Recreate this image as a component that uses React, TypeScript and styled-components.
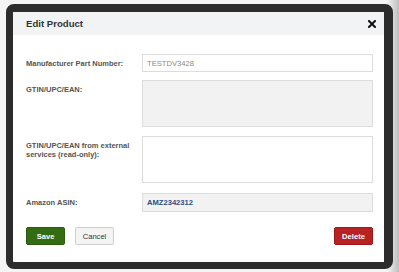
import React from 'react';
import styled, { createGlobalStyle } from 'styled-components';

const GlobalStyle = createGlobalStyle`
  html, body {
    margin: 0;
    padding: 0;
    background: #ececec;
    font-family: 'Liberation Sans', Arial, sans-serif;
  }
`;

const Page = styled.div`
  width: 399px;
  height: 272px;
  padding: 4px 0 0 6px;
  box-sizing: border-box;
  background: linear-gradient(90deg, #f4f4f4 0%, #f4f4f4 97%, #bdbdbd 100%);
`;

const Dialog = styled.div`
  width: 387px;
  height: 265px;
  box-sizing: border-box;
  border: 7px solid #2c2c2c;
  border-top-width: 8px;
  border-right-width: 9px;
  border-radius: 8px;
  background: #fff;
  display: flex;
  flex-direction: column;
  overflow: hidden;
`;

const Header = styled.div`
  height: 23px;
  flex: none;
  background: #f2f3f5;
  display: flex;
  align-items: center;
  justify-content: space-between;
  padding: 0 8px 0 13px;
`;

const Title = styled.div`
  font-size: 9.6px;
  font-weight: bold;
  color: #333;
`;

const CloseButton = styled.button`
  border: none;
  background: none;
  padding: 0;
  width: 9px;
  height: 9px;
  display: flex;
  align-items: center;
  justify-content: center;
  cursor: pointer;
`;

const Body = styled.div`
  flex: 1;
  display: flex;
  flex-direction: column;
  padding: 19px 11px 0 13px;
`;

const Row = styled.div<{ $gap: number }>`
  display: grid;
  grid-template-columns: 116px 1fr;
  margin-bottom: ${p => p.$gap}px;
`;

const Label = styled.label<{ $top: number }>`
  font-size: 7.5px;
  font-weight: bold;
  color: #555;
  line-height: 9px;
  padding-top: ${p => p.$top}px;
`;

const Field = styled.div<{ $height: number; $grey?: boolean }>`
  height: ${p => p.$height}px;
  box-sizing: border-box;
  border: 1px solid #dcdcdc;
  background: ${p => (p.$grey ? '#f2f2f2' : '#fff')};
  display: flex;
  align-items: center;
  padding-left: 4px;
`;

const FieldText = styled.span<{ $link?: boolean }>`
  font-size: 7.6px;
  color: ${p => (p.$link ? '#2d4f86' : '#8a8a8a')};
  font-weight: ${p => (p.$link ? 'bold' : 'normal')};
`;

const Footer = styled.div`
  display: flex;
  align-items: center;
  gap: 10px;
  margin-top: 5px;
`;

const Button = styled.button<{ $kind: 'save' | 'cancel' | 'delete' }>`
  width: 39px;
  height: 18px;
  box-sizing: border-box;
  border-radius: 2px;
  font-family: 'Liberation Sans', Arial, sans-serif;
  font-size: 7.6px;
  font-weight: ${p => (p.$kind === 'cancel' ? 'normal' : 'bold')};
  padding: 0;
  cursor: pointer;
  color: ${p => (p.$kind === 'cancel' ? '#333' : '#fff')};
  background: ${p =>
    p.$kind === 'save' ? '#336c12' : p.$kind === 'delete' ? '#b82223' : '#f4f4f4'};
  border: 1px solid
    ${p => (p.$kind === 'save' ? '#2a5a0e' : p.$kind === 'delete' ? '#9c1a1b' : '#cfcfcf')};
  &:last-child {
    margin-left: auto;
  }
`;

export default function App() {
  return (
    <>
      <GlobalStyle />
      <Page>
        <Dialog>
          <Header>
            <Title>Edit Product</Title>
            <CloseButton aria-label="Close">
              <svg width="8" height="8" viewBox="0 0 8 8">
                <path d="M1 1 L7 7 M7 1 L1 7" stroke="#111" strokeWidth="2" strokeLinecap="square" />
              </svg>
            </CloseButton>
          </Header>
          <Body>
            <Row $gap={8}>
              <Label $top={5}>Manufacturer Part Number:</Label>
              <Field $height={18}>
                <FieldText>TESTDV3428</FieldText>
              </Field>
            </Row>
            <Row $gap={9}>
              <Label $top={5}>GTIN/UPC/EAN:</Label>
              <Field $height={47} $grey />
            </Row>
            <Row $gap={10}>
              <Label $top={5}>
                GTIN/UPC/EAN from external
                <br />
                services (read-only):
              </Label>
              <Field $height={47} />
            </Row>
            <Row $gap={10}>
              <Label $top={5}>Amazon ASIN:</Label>
              <Field $height={19} $grey>
                <FieldText $link>AMZ2342312</FieldText>
              </Field>
            </Row>
            <Footer>
              <Button $kind="save">Save</Button>
              <Button $kind="cancel">Cancel</Button>
              <Button $kind="delete">Delete</Button>
            </Footer>
          </Body>
        </Dialog>
      </Page>
    </>
  );
}
